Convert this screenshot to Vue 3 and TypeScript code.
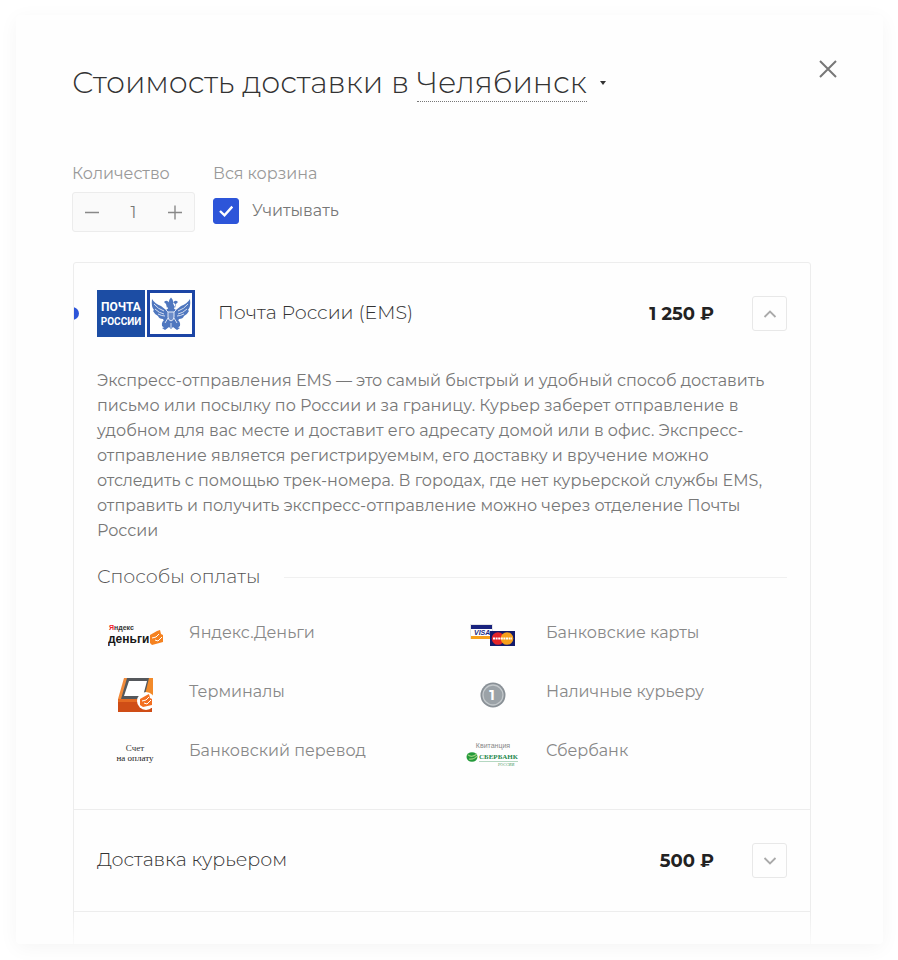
<script setup lang="ts">
import { ref } from 'vue'

interface Payment {
  id: string
  name: string
}

const city = ref('Челябинск')
const quantity = ref(1)
const wholeCart = ref(true)
const delivery = ref('ems')
const opened = ref('ems')

const payments: Payment[] = [
  { id: 'yandex', name: 'Яндекс.Деньги' },
  { id: 'cards', name: 'Банковские карты' },
  { id: 'terminal', name: 'Терминалы' },
  { id: 'cash', name: 'Наличные курьеру' },
  { id: 'invoice', name: 'Банковский перевод' },
  { id: 'sberbank', name: 'Сбербанк' },
]

function toggle(id: string) {
  opened.value = opened.value === id ? '' : id
}
</script>

<template>
  <main class="modal">
    <header class="head">
      <h1 class="title">
        Стоимость доставки в
        <button type="button" class="city"><span class="city-name">{{ city }}</span><span class="caret"></span></button>
      </h1>
      <button type="button" class="close" aria-label="Закрыть">
        <svg width="20" height="20" viewBox="0 0 20 20"><path d="M2 2 18 18M18 2 2 18" /></svg>
      </button>
    </header>

    <form class="options" @submit.prevent>
      <div class="option">
        <label class="caption" for="quantity">Количество</label>
        <div class="counter">
          <button type="button" aria-label="Меньше" @click="quantity = Math.max(1, quantity - 1)">
            <svg width="16" height="16" viewBox="0 0 16 16"><path d="M1 8.500H15" /></svg>
          </button>
          <input id="quantity" v-model.number="quantity" type="text" inputmode="numeric" />
          <button type="button" aria-label="Больше" @click="quantity++">
            <svg width="16" height="16" viewBox="0 0 16 16"><path d="M1 8.500H15M8 1.500V15.500" /></svg>
          </button>
        </div>
      </div>
      <div class="option">
        <span class="caption">Вся корзина</span>
        <label class="check">
          <span class="box">
            <input v-model="wholeCart" type="checkbox" />
            <svg v-if="wholeCart" width="26" height="26" viewBox="0 0 26 26"><path d="M7 13 11.500 17.300 19.300 8.600" /></svg>
          </span>
          <span class="check-text">Учитывать</span>
        </label>
      </div>
    </form>

    <ul class="list">
      <li class="item">
        <div class="row">
          <input id="ems" v-model="delivery" class="radio" type="radio" name="delivery" value="ems" />
          <svg class="post" width="98" height="47" viewBox="0 0 98 47">
            <rect width="48" height="47" fill="#1c4da4" />
            <text x="24" y="21" class="post-top" text-anchor="middle" fill="#fff">ПОЧТА</text>
            <text x="24" y="35" class="post-bottom" text-anchor="middle" fill="#fff">РОССИИ</text>
            <rect x="51.500" y="1.500" width="45" height="44" fill="#fff" stroke="#1c45a5" stroke-width="3" />
            <g fill="#4f77bf">
              <path d="M55 9q3 5 9 7l5 4 4-3 2 0 4 3 5-4q6-2 9-7 1 8-2 11l1 1q-2 4-5 5-1 3-5 3-1 3-4 3l2 5 3 1-3 2-4-3-2 2-2-2-4 3-3-2 3-1 2-5q-3 0-4-3-4 0-5-3-3-1-5-5l1-1q-3-3-2-11z" />
              <path d="M74 7.500l1.500 2 1 3 2 2-2 5h-5l-2-5 2-2 1-3zM67 12q3-3 5 1l-2 5-1-4zM81 12q-3-3-5 1l2 5 1-4z" />
              <path d="M65 36q-1-5 4-7l3 5-3 5zM83 36q1-5-4-7l-3 5 3 5z" />
            </g>
            <path d="M57 14q4 5 10 7M58 19q4 4 9 5M61 24q4 2 7 2M91 14q-4 5-10 7M90 19q-4 4-9 5M87 24q-4 2-7 2M69 20l3 3M79 20l-3 3M68 33l3-5M80 33l-3-5M74 33v5" fill="none" stroke="#d5def0" stroke-width="1" />
            <path d="M71 22h6v5q0 3-3 4-3-1-3-4z" fill="#6d8dc9" stroke="#e4eaf6" />
          </svg>
          <label class="name" for="ems">Почта России (EMS)</label>
          <strong class="price">1 250 ₽</strong>
          <button type="button" class="toggle" aria-label="Свернуть" @click="toggle('ems')">
            <svg width="14" height="8" viewBox="0 0 14 8"><path d="M1.500 7 7 1.500 12.500 7" /></svg>
          </button>
        </div>

        <div v-if="opened === 'ems'" class="details">
          <p class="text">
            Экспресс-отправления EMS — это самый быстрый и удобный способ доставить
            письмо или посылку по России и за границу. Курьер заберет отправление в
            удобном для вас месте и доставит его адресату домой или в офис. Экспресс-отправление
            является регистрируемым, его доставку и вручение можно отследить с помощью
            трек-номера. В городах, где нет курьерской службы EMS, отправить и получить
            экспресс-отправление можно через отделение Почты России
          </p>
          <h2 class="subtitle">Способы оплаты</h2>
          <ul class="payments">
            <li v-for="payment in payments" :key="payment.id" class="payment">
              <span class="logo">
                <svg v-if="payment.id === 'yandex'" width="56" height="26" viewBox="0 0 56 26">
                  <text x="1" y="7" class="yandex" fill="#333"><tspan fill="#f0202c">Я</tspan>ндекс</text>
                  <text x="0" y="20" class="money" fill="#181818">деньги</text>
                  <path d="M42 12 49 8l3-1 1 4 2 1v7l-11 3-2-2z" fill="#f58220" />
                  <path d="M44 15l4-1 3-3M47 17l3 1 4-4" fill="none" stroke="#fff" />
                </svg>
                <svg v-else-if="payment.id === 'cards'" width="46" height="24" viewBox="0 0 46 24">
                  <rect x=".5" y=".5" width="22" height="14" fill="#fff" stroke="#e5e5e5" />
                  <path d="M1 1h21v4H1z" fill="#19237e" />
                  <path d="M1 12h21v3H1z" fill="#f7a01b" />
                  <text x="4" y="11" class="visa" fill="#1b2a83">VISA</text>
                  <rect x="20" y="7" width="25" height="15" fill="#141b6b" />
                  <circle cx="28" cy="14.500" r="6.300" fill="#e42528" />
                  <circle cx="37" cy="14.500" r="6.300" fill="#f7a01b" />
                  <path d="M23 14.500h19" stroke="#fff" stroke-width="1.800" stroke-dasharray="2 .6" />
                </svg>
                <svg v-else-if="payment.id === 'terminal'" width="38" height="36" viewBox="0 0 38 36">
                  <path d="M7 1h29v18l-2 16H24z" fill="#f28a2a" />
                  <path d="M1 22h34v13H1z" fill="#cf4d16" />
                  <path d="M1 22h34v3H1z" fill="#e56a22" />
                  <path d="M8 1h24l-5 21H2L8 1" fill="#55585c" />
                  <path d="M7 1h3L4 22H1z" fill="#f08a3a" />
                  <path d="M12 4h18l-4 15H7z" fill="#fff" />
                  <circle cx="29" cy="24" r="9" fill="#fff" />
                  <path d="M23 22l7-4 2-1 1 4 2 1v6l-9 2-3-2z" fill="#f36f21" />
                  <path d="M25 24l4-1 3-3M27 26l3 1 4-4" fill="none" stroke="#fff" />
                </svg>
                <svg v-else-if="payment.id === 'cash'" width="26" height="26" viewBox="0 0 26 26">
                  <circle cx="13" cy="13" r="12.500" fill="#899096" />
                  <circle cx="13" cy="13" r="10" fill="#9ba2a7" stroke="#c3c8cb" stroke-width="1.300" />
                  <text x="12" y="18" class="coin" text-anchor="middle" fill="#fff">1</text>
                </svg>
                <svg v-else-if="payment.id === 'invoice'" width="42" height="20" viewBox="0 0 42 20">
                  <text x="20" y="7" class="receipt" text-anchor="middle" fill="#333">Счет</text>
                  <text x="20" y="17" class="receipt" text-anchor="middle" fill="#222">на оплату</text>
                </svg>
                <svg v-else width="54" height="26" viewBox="0 0 54 26">
                  <text x="27" y="7" class="caption-text" text-anchor="middle" fill="#888">Квитанция</text>
                  <ellipse cx="6" cy="16" rx="5.500" ry="4.800" fill="#249a3a" />
                  <path d="M2 14q4 3 9-1M3 18q5 1 8-3" fill="none" stroke="#9bd07e" stroke-width="1.200" />
                  <text x="13" y="18" class="sber" fill="#25884b">СБЕРБАНК</text>
                  <path d="M13 20.500h39" stroke="#82bc97" stroke-width=".6" />
                  <text x="32" y="25" class="russia" fill="#4a9a68">РОССИИ</text>
                </svg>
              </span>
              <span>{{ payment.name }}</span>
            </li>
          </ul>
        </div>
      </li>

      <li class="item">
        <div class="row">
          <span class="name">Доставка курьером</span>
          <strong class="price">500 ₽</strong>
          <button type="button" class="toggle" aria-label="Развернуть" @click="toggle('courier')">
            <svg width="14" height="8" viewBox="0 0 14 8"><path d="M1.500 1 7 6.500 12.500 1" /></svg>
          </button>
        </div>
      </li>
      <li class="item next"></li>
    </ul>
  </main>
</template>

<style>
body {
  background: #fff;
}
</style>

<style scoped>
.modal {
  position: relative;
  box-sizing: border-box;
  height: calc(100vh - 31px);
  margin: 15px 15px 16px 16px;
  padding: 48px 72px 0 56px;
  overflow: hidden;
  border-radius: 4px;
  background: #fefefe;
  box-shadow: 0 4px 20px rgba(0, 0, 0, 0.045);
  color: #333;
  font-family: Montserrat, Inter, "Noto Sans", sans-serif;
  font-size: 16px;
}

.modal::after {
  position: absolute;
  right: 0;
  bottom: 0;
  left: 0;
  height: 32px;
  background: linear-gradient(rgba(254, 254, 254, 0), rgba(254, 254, 254, 0.8));
  content: "";
}

button,
input {
  margin: 0;
  padding: 0;
  border: 0;
  background: none;
  color: inherit;
  font: inherit;
}

button {
  cursor: pointer;
}

svg {
  display: block;
  fill: none;
}

ul {
  margin: 0;
  padding: 0;
  list-style: none;
}

.head {
  display: flex;
  justify-content: space-between;
  align-items: flex-start;
  margin-right: -27px;
}

.title {
  margin: 0;
  font-size: 30px;
  font-weight: 300;
  line-height: 40px;
}

.city-name {
  border-bottom: 1px dotted #777;
}

.caret {
  display: inline-block;
  margin-left: 13px;
  border: 3px solid transparent;
  border-top: 4px solid #333;
  vertical-align: 5px;
}

.close {
  margin-top: -4px;
}

.close svg {
  stroke: #777;
  stroke-width: 2;
}

.options {
  display: flex;
  gap: 18px;
  margin-top: 61px;
}

.option {
  display: flex;
  flex-direction: column;
  gap: 8px;
}

.caption {
  color: #999;
  line-height: 20px;
}

.counter {
  display: flex;
  align-items: center;
  box-sizing: border-box;
  width: 123px;
  height: 40px;
  padding: 0 11px;
  border: 1px solid #ececec;
  border-radius: 3px;
  background: #fafafa;
  color: #777;
}

.counter svg {
  stroke: #888;
  stroke-width: 1.4;
}

.counter input {
  flex: 1;
  min-width: 0;
  text-align: center;
}

.check {
  display: flex;
  align-items: center;
  gap: 13px;
  height: 38px;
  color: #777;
}

.check-text {
  padding-bottom: 2px;
}

.box {
  display: grid;
}

.box > * {
  grid-area: 1 / 1;
}

.box input {
  width: 26px;
  height: 26px;
  border: 1px solid #2d55d9;
  border-radius: 3px;
  appearance: none;
}

.box input:checked {
  background: #2d55d9;
}

.box svg {
  stroke: #fff;
  stroke-width: 2.4;
  pointer-events: none;
}

.list {
  margin: 30px 0 0 1px;
  border: 1px solid #ededed;
  border-radius: 3px 3px 0 0;
}

.item {
  position: relative;
  overflow: hidden;
}

.item + .item {
  border-top: 1px solid #ededed;
}

.next {
  height: 60px;
}

.row {
  display: flex;
  align-items: center;
  height: 101px;
  padding: 0 23px;
}

.radio {
  position: absolute;
  left: -8px;
  width: 13px;
  height: 13px;
  border-radius: 50%;
  appearance: none;
}

.radio:checked {
  background: #2d55d9;
}

.post {
  margin-right: 23px;
}

.name {
  flex: 1;
  padding-bottom: 2px;
  color: #333;
  font-size: 19px;
  font-weight: 300;
}

.price {
  margin-right: 38px;
  color: #222;
  font-size: 18px;
  font-weight: 700;
}

.toggle {
  display: grid;
  place-content: center;
  box-sizing: border-box;
  width: 35px;
  height: 35px;
  border: 1px solid #e8e8e8;
  border-radius: 3px;
}

.toggle svg {
  stroke: #aaa;
  stroke-width: 1.8;
}

.details {
  padding: 4px 23px 29px;
}

.text {
  margin: 0;
  color: #777;
  line-height: 25px;
}

.subtitle {
  display: flex;
  align-items: center;
  gap: 24px;
  margin: 22px 0 14px;
  color: #555;
  font-size: 19px;
  font-weight: 300;
  line-height: 24px;
}

.subtitle::after {
  flex: 1;
  height: 1px;
  background: #f0f0f0;
  content: "";
}

.payments {
  display: grid;
  grid-template-columns: 1fr 1fr;
  column-gap: 24px;
}

.payment {
  display: flex;
  align-items: center;
  gap: 14px;
  height: 59px;
  color: #888;
}

.logo {
  display: flex;
  justify-content: center;
  width: 78px;
  padding-top: 6px;
}

.post-top {
  font: 700 12px Roboto, sans-serif;
}

.post-bottom {
  font: 700 10px Roboto, sans-serif;
}

.yandex {
  font: 700 7px "Liberation Sans", sans-serif;
}

.money {
  font: 700 12px "Liberation Sans", sans-serif;
}

.coin {
  font: 700 14px Montserrat, sans-serif;
}

.visa {
  font: italic 700 7px "Liberation Sans", sans-serif;
}

.receipt {
  font: 9px "Liberation Serif", serif;
}

.caption-text {
  font: 7px "Liberation Sans", sans-serif;
}

.sber {
  font: 700 7px "Liberation Serif", serif;
}

.russia {
  font: 4px "Liberation Serif", serif;
}
</style>
